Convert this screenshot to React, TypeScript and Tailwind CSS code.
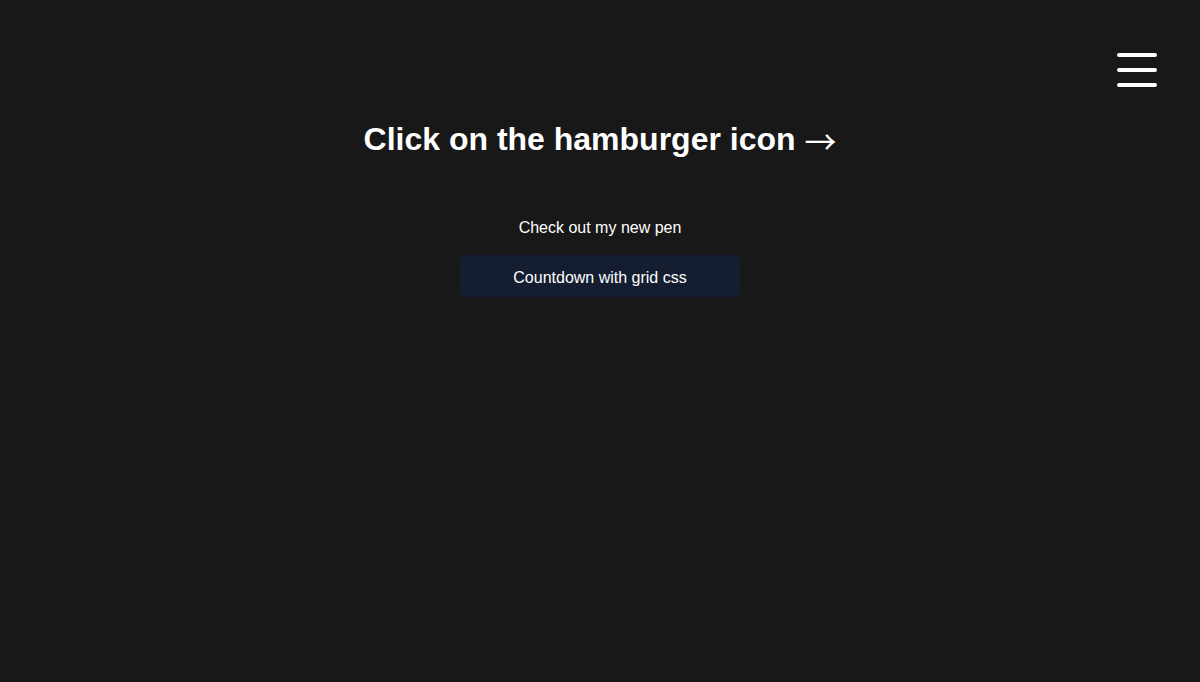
import { useState } from 'react';

// Simple landing with a hamburger toggle in the corner
const Hamburger = ({ open, onToggle }: { open: boolean; onToggle: () => void }) => {
    return (
        <button
            type="button"
            onClick={onToggle}
            aria-label="Menu"
            aria-expanded={open}
            className="absolute top-[53px] right-[43px] flex flex-col gap-[11px] w-10 cursor-pointer"
        >
            <span className="block h-1 w-10 rounded-full bg-white" />
            <span className="block h-1 w-10 rounded-full bg-white" />
            <span className="block h-1 w-10 rounded-full bg-white" />
        </button>
    );
};

export default function App() {
    const [open, setOpen] = useState(false);

    return (
        <div
            className="relative min-h-screen w-full bg-[#181818] text-white"
            style={{ fontFamily: '"Liberation Sans", Arial, sans-serif' }}
        >
            <Hamburger open={open} onToggle={() => setOpen(!open)} />

            <main className="flex flex-col items-center pt-[121px]">
                <h1 className="text-[32px] font-bold leading-[37px]">
                    Click on the hamburger icon{' '}
                    <span className="font-['Noto_Sans_CJK_SC',sans-serif] font-normal leading-[0] align-[-4px]">→</span>
                </h1>

                <p className="mt-[61px] text-base leading-[18px]">Check out my new pen</p>

                <a
                    href="#"
                    className="mt-[18px] flex h-[42px] w-[280px] items-center justify-center rounded bg-[#141e30] pt-[3px] text-base text-white"
                >
                    Countdown with grid css
                </a>
            </main>
        </div>
    );
}
